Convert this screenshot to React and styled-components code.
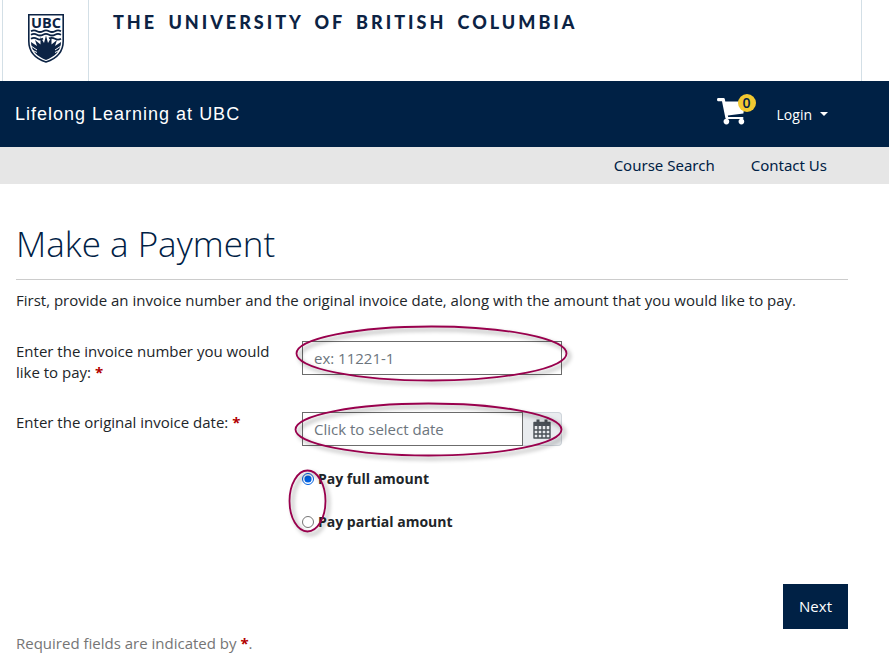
import { useState } from "react";
import styled, { createGlobalStyle } from "styled-components";

const App = () => {
  const [invoice, setInvoice] = useState("");
  const [date, setDate] = useState("");
  const [amount, setAmount] = useState("full");

  return (
    <>
      <GlobalStyle />
      <StTopBar>
        <StLogoLink href="#" aria-label="UBC home">
          <Crest />
        </StLogoLink>
        <StWordmark>The University of British Columbia</StWordmark>
      </StTopBar>
      <StUnitBar>
        <StUnitName href="#">Lifelong Learning at UBC</StUnitName>
        <StAccount>
          <StCart href="#" aria-label="Shopping cart">
            <CartIcon />
            <StBadge>0</StBadge>
          </StCart>
          <StLogin type="button">
            Login
            <StCaret />
          </StLogin>
        </StAccount>
      </StUnitBar>
      <StNav>
        <StNavLink href="#">Course Search</StNavLink>
        <StNavLink href="#">Contact Us</StNavLink>
      </StNav>
      <StMain>
        <StTitle>Make a Payment</StTitle>
        <StIntro>
          First, provide an invoice number and the original invoice date, along
          with the amount that you would like to pay.
        </StIntro>
        <form onSubmit={(e) => e.preventDefault()}>
          <StRow>
            <label htmlFor="invoice">
              Enter the invoice number you would like to pay:{" "}
              <StRequired>*</StRequired>
            </label>
            <StField>
              <StInput
                id="invoice"
                placeholder="ex: 11221-1"
                value={invoice}
                onChange={(e) => setInvoice(e.target.value)}
              />
              <Ring left={-7} top={-16} width={273} height={57} />
            </StField>
          </StRow>
          <StRow>
            <label htmlFor="date">
              Enter the original invoice date: <StRequired>*</StRequired>
            </label>
            <StField>
              <StInput
                id="date"
                placeholder="Click to select date"
                value={date}
                onChange={(e) => setDate(e.target.value)}
              />
              <StDateButton type="button" aria-label="Open calendar">
                <CalendarIcon />
              </StDateButton>
              <Ring left={-8} top={-10} width={269} height={55} />
            </StField>
          </StRow>
          <StOptions>
            <StOption>
              <StRadio
                type="radio"
                name="amount"
                checked={amount === "full"}
                onChange={() => setAmount("full")}
              />
              Pay full amount
            </StOption>
            <StOption>
              <StRadio
                type="radio"
                name="amount"
                checked={amount === "partial"}
                onChange={() => setAmount("partial")}
              />
              Pay partial amount
            </StOption>
            <Ring left={-14} top={1} width={39} height={64} />
          </StOptions>
          <StActions>
            <StNextButton type="submit">Next</StNextButton>
          </StActions>
        </form>
        <StNote>
          Required fields are indicated by <StRequired>*</StRequired>.
        </StNote>
      </StMain>
    </>
  );
};

export default App;

const Crest = () => (
  <svg width="36" height="50" viewBox="0 0 36 50" aria-hidden="true">
    <path
      d="M.8.8H35.2V27C35.2 38 29 44.5 18 48C7 44.5 .8 38 .8 27Z"
      fill="#fff"
      stroke="#0c2344"
      strokeWidth="1.6"
    />
    <text
      x="18"
      y="13.6"
      textAnchor="middle"
      fontFamily="Open Sans, sans-serif"
      fontWeight="700"
      fontSize="14.5"
      fill="#0c2344"
    >
      UBC
    </text>
    <g fill="none" stroke="#0c2344" strokeWidth="1.8">
      <path d="M3 17.2Q6 15.6 9 17.2T15 17.2T21 17.2T27 17.2T33 17.2" />
      <path d="M3 20.7Q6 19.1 9 20.7T15 20.7T21 20.7T27 20.7T33 20.7" />
      <path d="M3 24.8Q6 23 9 24.8T15 24.4M21 24.4Q24 23 27 24.8T33 24.8" />
    </g>
    <path
      d="M3 28L9 32L7 26L12.5 30.5L12.5 23L16 29L18 21.5L20 29L23.5 23L23.5 30.5L29 26L27 32L33 28C33 32 31.5 36 29 39C26 42 22 44.5 18 46C14 44.5 10 42 7 39C4.5 36 3 32 3 28Z"
      fill="#0c2344"
    />
    <path
      d="M3 32L9 36M33 32L27 36M4 36L9 38.5M32 36L27 38.5"
      stroke="#fff"
      strokeWidth="1"
    />
  </svg>
);

const CartIcon = () => (
  <svg width="30" height="27" viewBox="0 0 30 27" fill="currentColor">
    <path d="M1 0H6.6Q7.6 0 7.8 1L8.3 3.4H28L26.4 15.6L10.8 17.4L11.2 19H25.5Q26.5 19 26.5 20T25.5 21H9.4Q8.6 21 8.4 20L5 3.2H1Q0 3.2 0 1.6T1 0Z" />
    <circle cx="9.4" cy="23.6" r="2.8" />
    <circle cx="24.4" cy="23.6" r="2.8" />
  </svg>
);

const CalendarIcon = () => (
  <svg width="18" height="20" viewBox="0 0 18 20">
    <path
      d="M1 3.5H17V19H1ZM1 11H17M1 15H17M5 7V19M9 7V19M13 7V19"
      fill="none"
      stroke="currentColor"
      strokeWidth="1.4"
      strokeLinejoin="round"
    />
    <path
      d="M1 3H17V7H1ZM3.5 .5H6.5V5H3.5ZM11.5 .5H14.5V5H11.5Z"
      fill="currentColor"
    />
  </svg>
);

// hand-drawn style highlight around a control
const Ring = ({ left, top, width, height }) => (
  <StRing $left={left} $top={top} width={width} height={height}>
    <ellipse
      cx={width / 2}
      cy={height / 2}
      rx={width / 2 - 1.5}
      ry={height / 2 - 1.5}
      fill="none"
      stroke="#99004d"
      strokeWidth="1.8"
    />
  </StRing>
);

const GlobalStyle = createGlobalStyle`
  *, *::before, *::after {
    box-sizing: border-box;
  }
  body {
    margin: 0;
    background-color: #fff;
    color: #212529;
    font-family: "Open Sans", "Noto Sans", sans-serif;
    font-size: 15px;
    line-height: 21px;
  }
  button, input {
    font: inherit;
  }
`;

const StTopBar = styled.header`
  display: flex;
  height: 81px;
  margin: 0 27px 0 2px;
  border-left: 1px solid #d3dfe6;
  border-right: 1px solid #d3dfe6;
`;

const StLogoLink = styled.a`
  width: 86px;
  padding: 14px 0 0 25px;
  border-right: 1px solid #d3dfe6;
`;

const StWordmark = styled.div`
  padding: 12px 0 0 24px;
  color: #0c2344;
  font-family: Lato, sans-serif;
  font-size: 18px;
  font-weight: 900;
  letter-spacing: 3px;
  word-spacing: 4px;
  text-transform: uppercase;
  white-space: nowrap;
`;

const StUnitBar = styled.div`
  display: flex;
  justify-content: space-between;
  align-items: center;
  height: 66px;
  padding: 0 61px 0 15px;
  background-color: #002145;
`;

const StUnitName = styled.a`
  color: #fff;
  font-family: "Liberation Sans", Arial, sans-serif;
  font-size: 18px;
  letter-spacing: 1px;
  text-decoration: none;
`;

const StAccount = styled.div`
  display: flex;
  align-items: center;
  gap: 30px;
`;

const StCart = styled.a`
  position: relative;
  display: flex;
  margin-bottom: 6px;
  color: #fff;
`;

const StBadge = styled.span`
  position: absolute;
  top: -4px;
  right: -9px;
  width: 18px;
  height: 18px;
  border-radius: 50%;
  background-color: #f2c931;
  color: #002145;
  font-size: 14px;
  font-weight: 600;
  line-height: 18px;
  text-align: center;
`;

const StLogin = styled.button`
  display: flex;
  align-items: center;
  gap: 8px;
  padding: 0;
  border: none;
  background: none;
  color: #fff;
  font-size: 14px;
`;

const StCaret = styled.span`
  border-top: 4px solid #fff;
  border-left: 4px solid transparent;
  border-right: 4px solid transparent;
`;

const StNav = styled.nav`
  display: flex;
  justify-content: flex-end;
  align-items: center;
  gap: 36px;
  height: 37px;
  padding: 0 62px 0 16px;
  background-color: #e6e6e6;
`;

const StNavLink = styled.a`
  color: #002145;
  font-family: "Noto Sans", "Open Sans", sans-serif;
  text-decoration: none;
`;

const StMain = styled.main`
  padding: 36px 41px 8px 16px;
`;

const StTitle = styled.h1`
  margin: 0 0 10px;
  padding-bottom: 11px;
  border-bottom: 1px solid #ccc;
  color: #002145;
  font-size: 35px;
  font-weight: 300;
  line-height: 48px;
`;

const StIntro = styled.p`
  margin: 0 0 30px;
`;

const StRow = styled.div`
  display: grid;
  grid-template-columns: 256px 260px;
  gap: 30px;
  min-height: 42px;
  margin-bottom: 29px;
`;

const StRequired = styled.span`
  color: #b20000;
  font-weight: 700;
`;

const StField = styled.div`
  position: relative;
  display: flex;
  height: 34px;
`;

const StInput = styled.input`
  flex: 1;
  min-width: 0;
  padding: 0 11px;
  border: 1px solid #6c6c6c;
  background-color: #fff;
  color: #495057;
  &::placeholder {
    color: #6c757d;
    opacity: 1;
  }
`;

const StDateButton = styled.button`
  display: flex;
  justify-content: center;
  align-items: center;
  width: 39px;
  padding: 0;
  border: 1px solid #ced4da;
  border-left: none;
  border-radius: 0 4px 4px 0;
  background-color: #e9ecef;
  color: #495057;
`;

const StRing = styled.svg`
  position: absolute;
  left: ${(props) => props.$left}px;
  top: ${(props) => props.$top}px;
  overflow: visible;
  pointer-events: none;
  filter: drop-shadow(3px 3px 2px rgba(0, 0, 0, 0.4));
`;

const StOptions = styled.div`
  position: relative;
  display: flex;
  flex-direction: column;
  align-items: flex-start;
  gap: 22px;
  margin: -15px 0 52px 286px;
`;

const StOption = styled.label`
  display: flex;
  align-items: center;
  gap: 4px;
  font-size: 14px;
  font-weight: 700;
`;

const StRadio = styled.input`
  width: 12px;
  height: 12px;
  margin: 0;
  accent-color: #0060df;
`;

const StActions = styled.div`
  display: flex;
  justify-content: flex-end;
`;

const StNextButton = styled.button`
  height: 45px;
  padding: 0 16px;
  border: none;
  background-color: #002145;
  color: #fff;
`;

const StNote = styled.p`
  margin: 4px 0 0;
  color: #757575;
`;
